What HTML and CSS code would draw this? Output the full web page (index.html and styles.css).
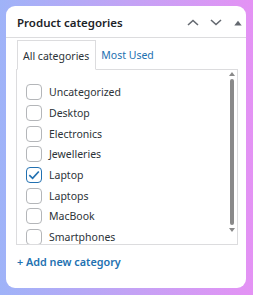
FILE: index.html
```html
<!DOCTYPE html>
<html lang="en">
<head>
<meta charset="utf-8">
<title>Product categories</title>
<link rel="stylesheet" href="styles.css">
</head>
<body>
<div class="card">
  <div class="header">
    <h2 class="title">Product categories</h2>
    <div class="actions">
      <svg class="ico" width="12" height="7" viewBox="0 0 12 7"><path d="M1 6 L6 1.5 L11 6" fill="none" stroke="#646970" stroke-width="1.6"/></svg>
      <svg class="ico" width="12" height="7" viewBox="0 0 12 7"><path d="M1 1 L6 5.5 L11 1" fill="none" stroke="#646970" stroke-width="1.6"/></svg>
      <svg class="ico tri" width="8" height="6" viewBox="0 0 8 6"><path d="M0.3 5.5 L4 0.8 L7.7 5.5 Z" fill="#646970"/></svg>
    </div>
  </div>
  <div class="body">
    <div class="tabs">
      <div class="tab active">All categories</div>
      <div class="tab link">Most Used</div>
    </div>
    <div class="panel">
      <ul class="list">
        <li class="item"><span class="cb"></span>Uncategorized</li>
        <li class="item"><span class="cb"></span>Desktop</li>
        <li class="item"><span class="cb"></span>Electronics</li>
        <li class="item"><span class="cb"></span>Jewelleries</li>
        <li class="item"><span class="cb checked"><svg width="12" height="10" viewBox="0 0 12 10"><path d="M1.3 5.2 L4.6 8.3 L10.8 1.5" fill="none" stroke="#2271b1" stroke-width="1.7"/></svg></span>Laptop</li>
        <li class="item"><span class="cb"></span>Laptops</li>
        <li class="item"><span class="cb"></span>MacBook</li>
        <li class="item"><span class="cb"></span>Smartphones</li>
      </ul>
      <div class="scrollbar">
        <svg class="arrow" width="6" height="4" viewBox="0 0 6 4"><path d="M0 4 L3 0 L6 4 Z" fill="#8a8a8a"/></svg>
        <div class="thumb"></div>
        <svg class="arrow" width="6" height="4" viewBox="0 0 6 4"><path d="M0 0 L3 4 L6 0 Z" fill="#8a8a8a"/></svg>
      </div>
    </div>
    <a class="add" href="#">+ Add new category</a>
  </div>
</div>
</body>
</html>
```

FILE: styles.css
```css
* { box-sizing: border-box; }
html, body { margin: 0; padding: 0; }
body {
  width: 253px;
  height: 295px;
  padding: 6px 7px 7px 6px;
  background: linear-gradient(90deg, #9fb3f8 0%, #c2a3f5 50%, #e492f4 100%);
  font-family: "Noto Sans", "Open Sans", sans-serif;
  color: #2c3338;
}
.card {
  background: #fff;
  border-radius: 9px;
  height: 282px;
  display: flex;
  flex-direction: column;
}
.header {
  height: 32px;
  border-bottom: 1px solid #dcdcde;
  display: flex;
  align-items: center;
  justify-content: space-between;
  padding: 2px 4px 0 11px;
}
.title {
  margin: 0;
  font-size: 11.5px;
  font-weight: 600;
  color: #1d2327;
}
.actions {
  display: flex;
  align-items: center;
  gap: 11px;
}
.ico { display: block; }
.tri { margin-left: 1px; }
.body {
  padding: 2px 8px 0 10px;
  display: flex;
  flex-direction: column;
}
.tabs {
  display: flex;
  height: 29px;
  align-items: stretch;
}
.tab {
  font-size: 10.5px;
  display: flex;
  align-items: center;
  padding: 1px 5px 0;
}
.tab.active {
  border: 1px solid #dcdcde;
  border-bottom: 1px solid #fff;
  background: #fff;
  position: relative;
  margin-bottom: -1px;
  margin-left: 1px;
  padding-right: 6px;
  z-index: 1;
}
.tab.link { color: #2271b1; padding-left: 5px; }
.panel {
  position: relative;
  border: 1px solid #dcdcde;
  height: 176px;
  overflow: hidden;
}
.list {
  list-style: none;
  margin: 0;
  padding: 12px 0 0 9px;
}
.item {
  height: 20.7px;
  display: flex;
  align-items: center;
  font-size: 10.5px;
  gap: 7px;
}
.cb {
  width: 16px;
  height: 16px;
  border: 1px solid #b4b6b9;
  border-radius: 4px;
  display: flex;
  align-items: center;
  justify-content: center;
  flex: none;
}
.cb.checked { border: 1.5px solid #2271b1; }
.scrollbar {
  position: absolute;
  right: 1px;
  top: 2px;
  bottom: 2px;
  width: 8px;
  display: flex;
  flex-direction: column;
  align-items: center;
  gap: 3px;
}
.arrow { display: block; flex: none; }
.thumb {
  width: 4px;
  border-radius: 2px;
  background: #8a8a8a;
  height: 146px;
}
.add {
  margin-top: 9px;
  color: #2271b1;
  text-decoration: none;
  font-size: 10.8px;
  font-weight: 600;
  padding-left: 1px;
}
```
